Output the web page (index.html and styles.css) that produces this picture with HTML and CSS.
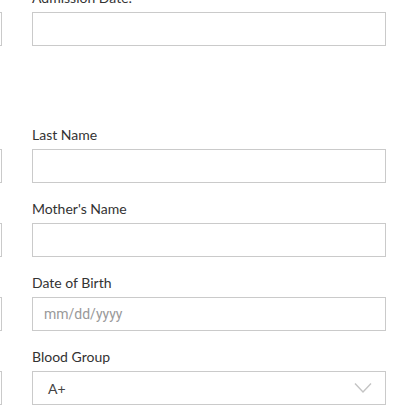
FILE: index.html
```html
<!DOCTYPE html>
<html>
<head>
<meta charset="utf-8">
<link rel="stylesheet" href="styles.css">
</head>
<body>
<form class="form">
  <div class="field"><label class="label">Admission No:</label><div class="input"></div></div>
  <div class="field"><label class="label">Admission Date:</label><div class="input"></div></div>
  <div class="spacer"></div>
  <div class="spacer"></div>
  <div class="field"><label class="label">First Name</label><div class="input"></div></div>
  <div class="field"><label class="label">Last Name</label><div class="input"></div></div>
  <div class="field"><label class="label">Father's Name</label><div class="input"></div></div>
  <div class="field"><label class="label">Mother's Name</label><div class="input"></div></div>
  <div class="field"><label class="label">Gender</label><div class="input"></div></div>
  <div class="field"><label class="label">Date of Birth</label><div class="input"><span class="placeholder">mm/dd/yyyy</span></div></div>
  <div class="field"><label class="label">Religion</label><div class="input"></div></div>
  <div class="field"><label class="label">Blood Group</label><div class="input select"><span class="value">A+</span>
    <svg class="chev" width="18" height="12" viewBox="0 0 18 12"><polyline points="1,1.5 9,10 17,1.5" fill="none" stroke="#c4c4c4" stroke-width="1.4"/></svg></div></div>
</form>
</body>
</html>
```
FILE: styles.css
```css
html, body {
  margin: 0;
  padding: 0;
  background: #fff;
  overflow: hidden;
}
.form {
  display: grid;
  grid-template-columns: 354px 354px;
  column-gap: 30px;
  margin-top: -12px;
  margin-left: -352px;
  font-family: Lato, "Liberation Sans", sans-serif;
}
.field {
  display: flex;
  flex-direction: column;
  margin-bottom: 16px;
}
.spacer {
  height: 63px;
}
.label {
  font-size: 14px;
  line-height: 20px;
  color: #333;
  margin-bottom: 4px;
}
.input {
  box-sizing: border-box;
  height: 34px;
  border: 1px solid #cacaca;
  background: #fff;
  display: flex;
  align-items: center;
}
.placeholder {
  font-family: Roboto, "Liberation Sans", sans-serif;
  font-size: 14px;
  color: #999;
  padding-left: 11px;
}
.select {
  justify-content: space-between;
  padding: 0 13px 0 15px;
}
.value {
  font-size: 14px;
  color: #444;
}
.chev {
  display: block;
}
```
